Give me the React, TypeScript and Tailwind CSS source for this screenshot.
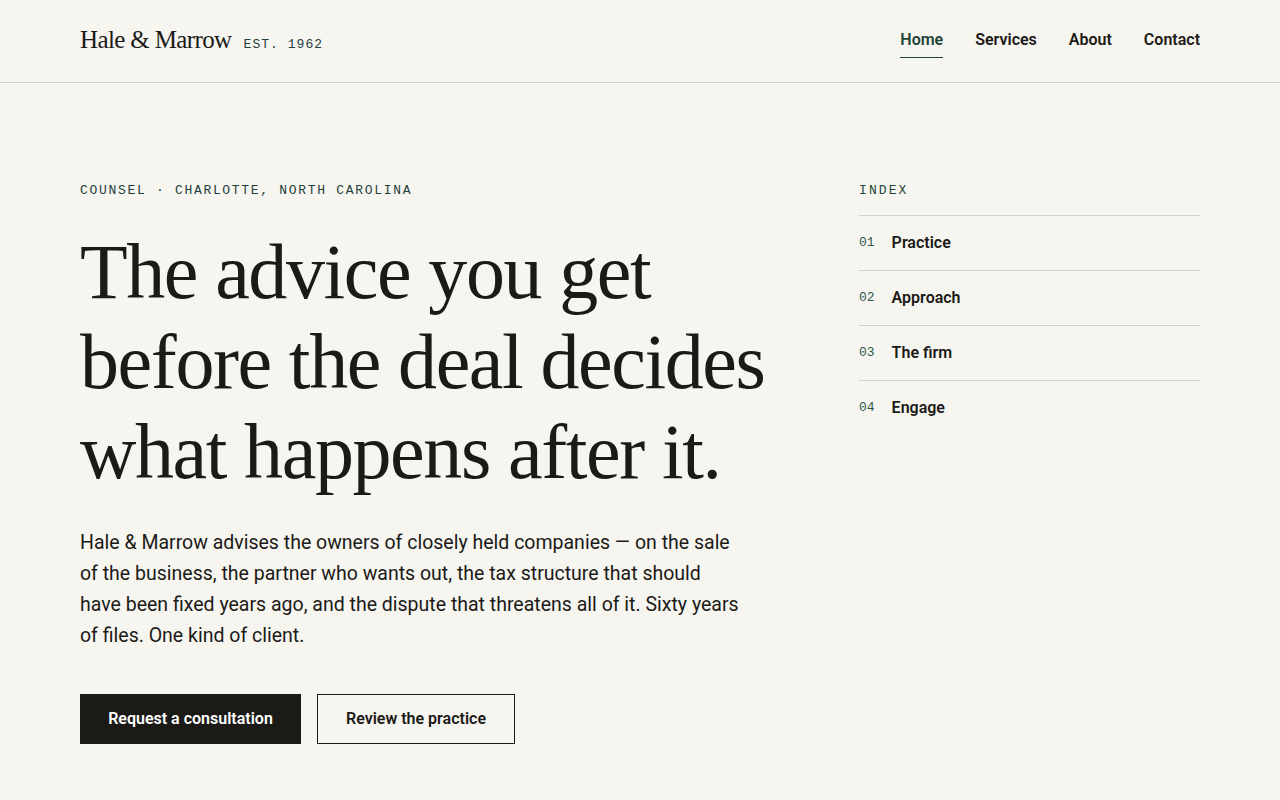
const mono = "font-['Liberation_Mono','DejaVu_Sans_Mono',monospace]";
const serif = "font-['Liberation_Serif','DejaVu_Serif',serif]";
const sans = "font-['Roboto','Liberation_Sans',sans-serif]";

const navItems = ["Home", "Services", "About", "Contact"];

const indexItems = [
  { num: "01", label: "Practice" },
  { num: "02", label: "Approach" },
  { num: "03", label: "The firm" },
  { num: "04", label: "Engage" },
];

export default function App() {
  return (
    <div className={`min-h-screen bg-[#f6f5f0] text-[#1c1a17] ${sans}`}>
      <header className="border-b border-[#d6d3cb]">
        <div className="mx-auto flex h-[82px] max-w-[1280px] items-center justify-between px-20 pb-[3px]">
          <div className="flex items-baseline gap-3">
            <span className={`${serif} text-[25px] tracking-tight`}>Hale &amp; Marrow</span>
            <span className={`${mono} text-[13px] tracking-[0.08em] text-[#1f3f3c]`}>EST. 1962</span>
          </div>
          <nav className="flex items-center gap-8 text-[16px] font-semibold">
            {navItems.map((item) => (
              <a
                key={item}
                href="#"
                className={
                  item === "Home"
                    ? "relative text-[#1f4536] after:absolute after:left-0 after:right-0 after:top-[29px] after:h-px after:bg-[#1f4536]"
                    : ""
                }
              >
                {item}
              </a>
            ))}
          </nav>
        </div>
      </header>

      <main className="mx-auto grid max-w-[1280px] grid-cols-[1fr_341px] gap-[60px] px-20 pt-[98px]">
        <section>
          <p className={`${mono} text-[13px] tracking-[0.13em] text-[#1f3f3c]`}>
            COUNSEL · CHARLOTTE, NORTH CAROLINA
          </p>
          <h1 className={`${serif} mt-[26px] text-[78px] leading-[90px] tracking-[-0.018em]`}>
            The advice you get
            <br />
            before the deal decides
            <br />
            what happens after it.
          </h1>
          <p className="mt-[30px] max-w-[700px] text-[19.5px] leading-[31px]">
            Hale &amp; Marrow advises the owners of closely held companies — on the sale
            <br />
            of the business, the partner who wants out, the tax structure that should
            <br />
            have been fixed years ago, and the dispute that threatens all of it. Sixty years
            <br />
            of files. One kind of client.
          </p>
          <div className="mt-[43px] flex gap-4">
            <a
              href="#"
              className="flex h-[50px] w-[221px] items-center justify-center bg-[#1c1a17] text-[16px] font-semibold text-white"
            >
              Request a consultation
            </a>
            <a
              href="#"
              className="flex h-[50px] w-[198px] items-center justify-center border border-[#1c1a17] text-[16px] font-semibold"
            >
              Review the practice
            </a>
          </div>
        </section>

        <aside>
          <p className={`${mono} text-[13px] tracking-[0.16em] text-[#1f4536]`}>INDEX</p>
          <ul className="mt-[14px] border-t border-[#d6d3cb]">
            {indexItems.map((item) => (
              <li key={item.num} className="flex h-[55px] items-center gap-[17px] border-b border-[#d6d3cb] last:border-b-0">
                <span className={`${mono} text-[13px] text-[#2f5a4a]`}>{item.num}</span>
                <span className="text-[16px] font-semibold">{item.label}</span>
              </li>
            ))}
          </ul>
        </aside>
      </main>
    </div>
  );
}
